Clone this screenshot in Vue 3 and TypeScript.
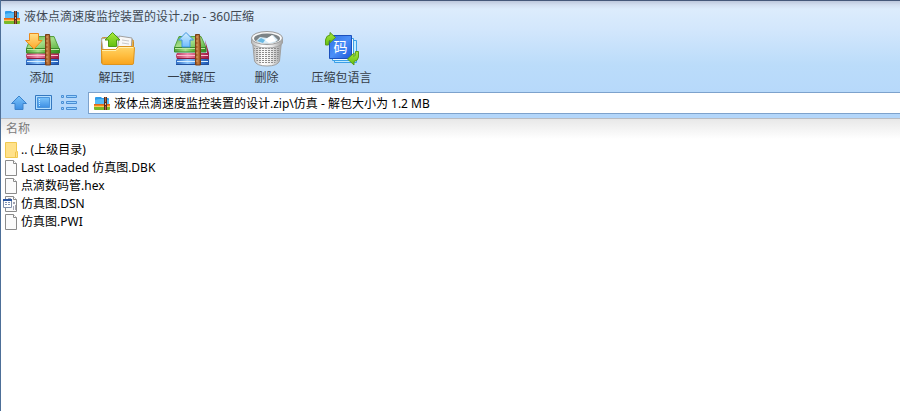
<script setup lang="ts">
import { ref } from 'vue'

type ToolIcon = 'add' | 'folder' | 'extract' | 'trash' | 'code'
type FileIcon = 'folder' | 'page' | 'design'

interface Tool {
  icon: ToolIcon
  label: string
}

interface Entry {
  name: string
  icon: FileIcon
}

const title = '液体点滴速度监控装置的设计.zip - 360压缩'
const path = ref('液体点滴速度监控装置的设计.zip\\仿真 - 解包大小为 1.2 MB')

const tools: Tool[] = [
  { icon: 'add', label: '添加' },
  { icon: 'folder', label: '解压到' },
  { icon: 'extract', label: '一键解压' },
  { icon: 'trash', label: '删除' },
  { icon: 'code', label: '压缩包语言' },
]

const entries: Entry[] = [
  { name: '.. (上级目录)', icon: 'folder' },
  { name: 'Last Loaded 仿真图.DBK', icon: 'page' },
  { name: '点滴数码管.hex', icon: 'page' },
  { name: '仿真图.DSN', icon: 'design' },
  { name: '仿真图.PWI', icon: 'page' },
]
</script>

<template>
  <div class="window">
    <svg class="defs" width="0" height="0" aria-hidden="true">
      <defs>
        <linearGradient id="g-green" x1="0" y1="0" x2="1" y2="0">
          <stop offset="0" stop-color="#4fa336" />
          <stop offset="0.35" stop-color="#a9e08c" />
          <stop offset="0.6" stop-color="#5cb53c" />
          <stop offset="1" stop-color="#358a22" />
        </linearGradient>
        <linearGradient id="g-top" x1="0" y1="0" x2="1" y2="1">
          <stop offset="0" stop-color="#5fb548" />
          <stop offset="0.5" stop-color="#a5de88" />
          <stop offset="1" stop-color="#5fb544" />
        </linearGradient>
        <linearGradient id="g-red" x1="0" y1="0" x2="1" y2="0">
          <stop offset="0" stop-color="#b8365f" />
          <stop offset="0.35" stop-color="#f08cab" />
          <stop offset="0.65" stop-color="#cc4870" />
          <stop offset="1" stop-color="#9c1c44" />
        </linearGradient>
        <linearGradient id="g-blue" x1="0" y1="0" x2="1" y2="0">
          <stop offset="0" stop-color="#2f6cc4" />
          <stop offset="0.35" stop-color="#8cc6fc" />
          <stop offset="0.65" stop-color="#4388e0" />
          <stop offset="1" stop-color="#1f54ac" />
        </linearGradient>
        <linearGradient id="g-belt" x1="0" y1="0" x2="1" y2="0">
          <stop offset="0" stop-color="#8a4818" />
          <stop offset="0.5" stop-color="#c98042" />
          <stop offset="1" stop-color="#8a4818" />
        </linearGradient>
        <linearGradient id="g-orange" x1="0" y1="0" x2="0" y2="1">
          <stop offset="0" stop-color="#ffe08a" />
          <stop offset="1" stop-color="#ffa828" />
        </linearGradient>
        <linearGradient id="g-folder" x1="0" y1="0" x2="0" y2="1">
          <stop offset="0" stop-color="#ffd568" />
          <stop offset="0.5" stop-color="#ffbe40" />
          <stop offset="1" stop-color="#f9a41c" />
        </linearGradient>
        <linearGradient id="g-lime" x1="0" y1="0" x2="0" y2="1">
          <stop offset="0" stop-color="#a9e83c" />
          <stop offset="1" stop-color="#62c010" />
        </linearGradient>
        <linearGradient id="g-sky" x1="0" y1="0" x2="0" y2="1">
          <stop offset="0" stop-color="#d5eeff" />
          <stop offset="1" stop-color="#6dbcfc" />
        </linearGradient>
        <linearGradient id="g-bin" x1="0" y1="0" x2="1" y2="0">
          <stop offset="0" stop-color="#b8b8b8" />
          <stop offset="0.35" stop-color="#ffffff" />
          <stop offset="0.65" stop-color="#ececec" />
          <stop offset="1" stop-color="#a0a0a0" />
        </linearGradient>
        <linearGradient id="g-card" x1="0" y1="0" x2="1" y2="1">
          <stop offset="0" stop-color="#2f6fe4" />
          <stop offset="0.5" stop-color="#4b8ff8" />
          <stop offset="1" stop-color="#1f58d8" />
        </linearGradient>
        <linearGradient id="g-nav" x1="0" y1="0" x2="0" y2="1">
          <stop offset="0" stop-color="#7cc4fb" />
          <stop offset="1" stop-color="#3d8fe4" />
        </linearGradient>
        <pattern id="p-mesh" width="3" height="2" patternUnits="userSpaceOnUse">
          <rect x="1" y="1" width="2" height="1" fill="#8c8c8c" />
        </pattern>
        <symbol id="zip" viewBox="0 0 16 16">
          <path d="M1 9V3q0-1 1-1h5l1 1h6q1 0 1 1v5z" fill="#2f9be8" />
          <path d="M1 5q7-2 14 0v4H1z" fill="#58bcf8" />
          <path d="M0 9h16v3H0z" fill="#f58a1c" />
          <path d="M0 9h16v1H0z" fill="#e0681c" />
          <path d="M0 12h16v2q0 1-1 1H1q-1 0-1-1z" fill="#79b928" />
          <path d="M0 11h16v1H0z" fill="#ffc65a" />
          <path d="M10 2h3v13h-3z" fill="#5e2c1c" />
          <path d="M11 2h1v5h-1zM11 11h1v4h-1z" fill="#a86a44" />
          <path d="M11 8h1v2h-1z" fill="#e8b48a" />
        </symbol>
        <symbol id="books-base" viewBox="0 0 36 36">
          <path d="M31 9l4 13v11l-2 1V22z" fill="#a91e48" />
          <path d="M3 28h31l1 1v4q0 1-1 1H3q-1 0-1-1v-4z" fill="url(#g-blue)" />
          <path d="M2 33.500h33" stroke="#1f4f9c" />
          <path d="M3 30.500h31" stroke="#d5edff" />
          <path d="M3 22h32v6H3q-2-3 0-6z" fill="url(#g-red)" />
          <path d="M3 27.500h32" stroke="#8c1c40" />
          <path d="M3 24.500h31" stroke="#fbbccf" />
        </symbol>
        <symbol id="belt" viewBox="0 0 36 36">
          <path d="M21.500 3.500h4l1 12v18.500h-5V16z" fill="url(#g-belt)" stroke="#793f16" />
          <path d="M23 5v28" stroke="#dba06a" stroke-dasharray="2 2" />
        </symbol>
      </defs>
    </svg>

    <header class="chrome">
      <div class="titlebar">
        <svg class="icon16" aria-hidden="true"><use href="#zip" /></svg>
        <span>{{ title }}</span>
      </div>

      <div class="toolbar">
        <button v-for="tool in tools" :key="tool.icon" type="button" class="tool">
          <svg class="icon36" viewBox="0 0 36 36" aria-hidden="true">
            <template v-if="tool.icon === 'add'">
              <use href="#books-base" />
              <path d="M7 5.500h23l5 12H2.500z" fill="url(#g-top)" stroke="#57a040" />
              <path d="M2.500 17.500h33v4.500h-33z" fill="url(#g-green)" stroke="#3b8a2a" />
              <path d="M3 18.500h32" stroke="#bfeaa5" />
              <use href="#belt" />
              <path d="M5.500 2.500h9v7h3.500l-8 8.500-8.500-8.500h4z" fill="url(#g-orange)" stroke="#ec8a1c" />
            </template>
            <template v-else-if="tool.icon === 'folder'">
              <path d="M2.500 32V8.500q0-2 2-2h8l2 2h18q2 0 2 2v21z" fill="#f0b040" stroke="#c88c2c" />
              <path d="M2.500 8l16-3 3 14H4z" fill="#ffffff" stroke="#a9a9a9" />
              <path d="M20 5l13 2-1 14H18z" fill="#f7f7f7" stroke="#a0a0a0" />
              <path d="M23 9l7 1M23 12l7 1" stroke="#c8c8c8" />
              <path d="M2.500 18.500h14l3-3h15l1 1-1 15.500q0 1.500-1.500 1.500H4.500q-1.500 0-1.500-1.500z" fill="url(#g-folder)" stroke="#dc9420" />
              <path d="M3 19.500h14l3-3h14" fill="none" stroke="#fff0b0" />
              <path d="M13.500 1.500l7.500 7.500h-3.500v6.500h-8V9H6z" fill="url(#g-lime)" stroke="#4c9c14" />
            </template>
            <template v-else-if="tool.icon === 'extract'">
              <use href="#books-base" />
              <path d="M5 5.500h22l5 11H.5z" fill="url(#g-top)" stroke="#57a040" />
              <path d="M.5 16.500H32v4.500H.5z" fill="url(#g-green)" stroke="#3b8a2a" />
              <path d="M1 17.500h30" stroke="#bfeaa5" />
              <use href="#belt" />
              <path d="M12 1.500l7.500 7.500h-3.500v7H8V9H4.500z" fill="url(#g-sky)" stroke="#4096e0" />
            </template>
            <template v-else-if="tool.icon === 'trash'">
              <path d="M3.500 10h29l-2 20q-2 5-12.500 5T5.500 30z" fill="url(#g-bin)" stroke="#a0a0a0" />
              <path d="M5 17h26l-2 12q-2 4-11 4T7 29z" fill="url(#p-mesh)" />
              <path d="M2.500 7v5q3 5 15.500 5t15.500-5V7z" fill="url(#g-bin)" stroke="#a0a0a0" />
              <ellipse cx="18" cy="7" rx="15.500" ry="6.500" fill="#f8f8f8" stroke="#9a9a9a" />
              <ellipse cx="18" cy="7.500" rx="13" ry="5" fill="#7c8386" />
              <path d="M7 10l4-4 7 1 6-3 5 5q-3 3.500-11 3.500T7 10z" fill="#d9edf8" />
              <path d="M8 10l4-3 4 2-2 3z" fill="#69b8e2" />
              <path d="M16 9l7-5 4 6-7 2z" fill="#ffffff" />
            </template>
            <template v-else>
              <path d="M10.500 9.500h22v22h-22z" fill="#c2ebff" stroke="#3b9fe8" />
              <path d="M8.500 7.500h21v22h-21z" fill="#f4fcff" stroke="#3b9fe8" />
              <path d="M5.500 4.500h22v23h-22z" fill="url(#g-card)" stroke="#1b50bd" />
              <text x="16.500" y="21" class="card-char">码</text>
              <path d="M1.500 14V9Q2 4.500 6 4V1.500l5.500 5L6 11.500V9q-1.500 0-1.500 5z" fill="url(#g-lime)" stroke="#5a9c18" />
              <path d="M34.500 20.500V26q-.5 4-4.500 4.500V34l-6.500-6 6.500-6v3.500q1.500 0 1.500-5z" fill="url(#g-lime)" stroke="#5a9c18" />
            </template>
          </svg>
          <span>{{ tool.label }}</span>
        </button>
      </div>

      <div class="navbar">
        <button type="button" class="nav" aria-label="向上">
          <svg class="icon16" viewBox="0 0 16 16" aria-hidden="true">
            <path d="M8 1l7.500 7.500H12v6H4v-6H.5z" fill="url(#g-nav)" stroke="#3c83cc" />
          </svg>
        </button>
        <button type="button" class="nav" aria-label="预览">
          <svg class="icon-wide" viewBox="0 0 18 16" aria-hidden="true">
            <path d="M.5 .5h16v14H.5z" fill="#b5dfff" stroke="#3478c0" />
            <path d="M2.500 2.500h12v10h-12z" fill="url(#g-nav)" stroke="#4a94dc" />
            <path d="M4.500 4v7" stroke="#c5e9ff" stroke-dasharray="1 1" />
          </svg>
        </button>
        <button type="button" class="nav" aria-label="列表">
          <svg class="icon16" viewBox="0 0 16 16" aria-hidden="true">
            <path d="M.5 .5h2v2h-2zM.5 6.500h2v2h-2zM.5 12.500h2v2h-2zM5.500 .5h10v2h-10zM5.500 6.500h10v2h-10zM5.500 12.500h10v2h-10z" fill="#9bd4ff" stroke="#4a8ed4" />
          </svg>
        </button>
        <label class="address">
          <svg class="icon16" aria-hidden="true"><use href="#zip" /></svg>
          <input v-model="path" type="text" aria-label="路径" />
        </label>
      </div>
    </header>

    <table class="files">
      <thead>
        <tr><th scope="col">名称</th></tr>
      </thead>
      <tbody>
        <tr v-for="entry in entries" :key="entry.name">
          <td>
            <div class="entry">
              <svg class="icon-file" viewBox="0 0 18 16" aria-hidden="true">
                <template v-if="entry.icon === 'folder'">
                  <path d="M2.500.5h11v9h1v6h-12z" fill="#ffe18a" stroke="#f0c850" />
                  <path d="M12.500 15v-5h1" fill="none" stroke="#f0c44c" />
                </template>
                <template v-else>
                  <path d="M2.500.5h8l3 3v12h-11z" fill="#fbfbfb" stroke="#8b8b8b" />
                  <path d="M10.500.5v3h3" fill="#ffffff" stroke="#8b8b8b" />
                </template>
                <template v-if="entry.icon === 'design'">
                  <path d="M10 6h2v2h-2zM10 10h1v4h-1zM12 9h1v5h-1zM5 2h3v1H5z" fill="#a3a3b2" />
                  <path d="M.5 3.500h8v8h-8z" fill="#ffffff" stroke="#8090ac" />
                  <path d="M0 3h9v2H0z" fill="#2854a0" />
                  <path d="M2 6h2v1H2zM5 6h2v1H5zM2 8h2v1H2zM5 8h2v1H5z" fill="#8193b4" />
                </template>
              </svg>
              <span>{{ entry.name }}</span>
            </div>
          </td>
        </tr>
      </tbody>
    </table>
  </div>
</template>

<style>
body {
  background: #ffffff;
}
</style>

<style scoped>
.window {
  min-height: 100vh;
  box-sizing: border-box;
  border-left: 1px solid #4d6f98;
  background: #ffffff;
  color: #000000;
  font-family: "Noto Sans", "Noto Sans CJK SC", sans-serif;
  font-size: 12px;
  line-height: 18px;
  overflow: hidden;
}

.defs {
  position: absolute;
}

.chrome {
  border-top: 1px solid #46597a;
  border-bottom: 1px solid #b9bcc2;
  background: linear-gradient(#bdc8dc 0, #d3e0f1 4px, #dcecfc 8px, #d3e7fc 28px, #bbdcfa 64px, #b3d6fa 100%);
}

.titlebar {
  display: flex;
  align-items: center;
  gap: 4px;
  padding: 7px 3px 0;
  color: #404852;
}

.icon16 {
  display: block;
  flex: none;
  width: 16px;
  height: 16px;
}

.icon-wide,
.icon-file {
  display: block;
  flex: none;
  width: 18px;
  height: 16px;
}

.icon36 {
  display: block;
  width: 36px;
  height: 36px;
}

.toolbar {
  display: flex;
  padding: 5px 3px 0;
}

button {
  border: 0;
  padding: 0;
  background: none;
  color: inherit;
  font: inherit;
}

.tool {
  display: flex;
  flex-direction: column;
  align-items: center;
  gap: 2px;
  width: 75px;
  color: #353d48;
  white-space: nowrap;
}

.card-char {
  fill: #ffffff;
  font-size: 14px;
  text-anchor: middle;
}

.navbar {
  display: flex;
  align-items: center;
  gap: 8px;
  padding: 5px 0 4px 10px;
}

.address {
  display: flex;
  flex: 1;
  align-items: center;
  gap: 4px;
  margin-left: 3px;
  padding-left: 5px;
  border: 1px solid #7da2cc;
  border-right: 0;
  background: #ffffff;
}

.address input {
  flex: 1;
  min-width: 0;
  height: 20px;
  border: 0;
  padding: 0;
  outline: 0;
  background: none;
  color: inherit;
  font: inherit;
}

.files {
  width: 100%;
  border-collapse: collapse;
  background: linear-gradient(#e8e8e8, #ffffff 20px);
}

.files th {
  height: 20px;
  padding: 0 5px 2px;
  color: #7b7b7b;
  font-weight: normal;
  text-align: left;
}

.files td {
  padding: 0;
}

.entry {
  display: flex;
  align-items: center;
  padding-left: 2px;
}
</style>
